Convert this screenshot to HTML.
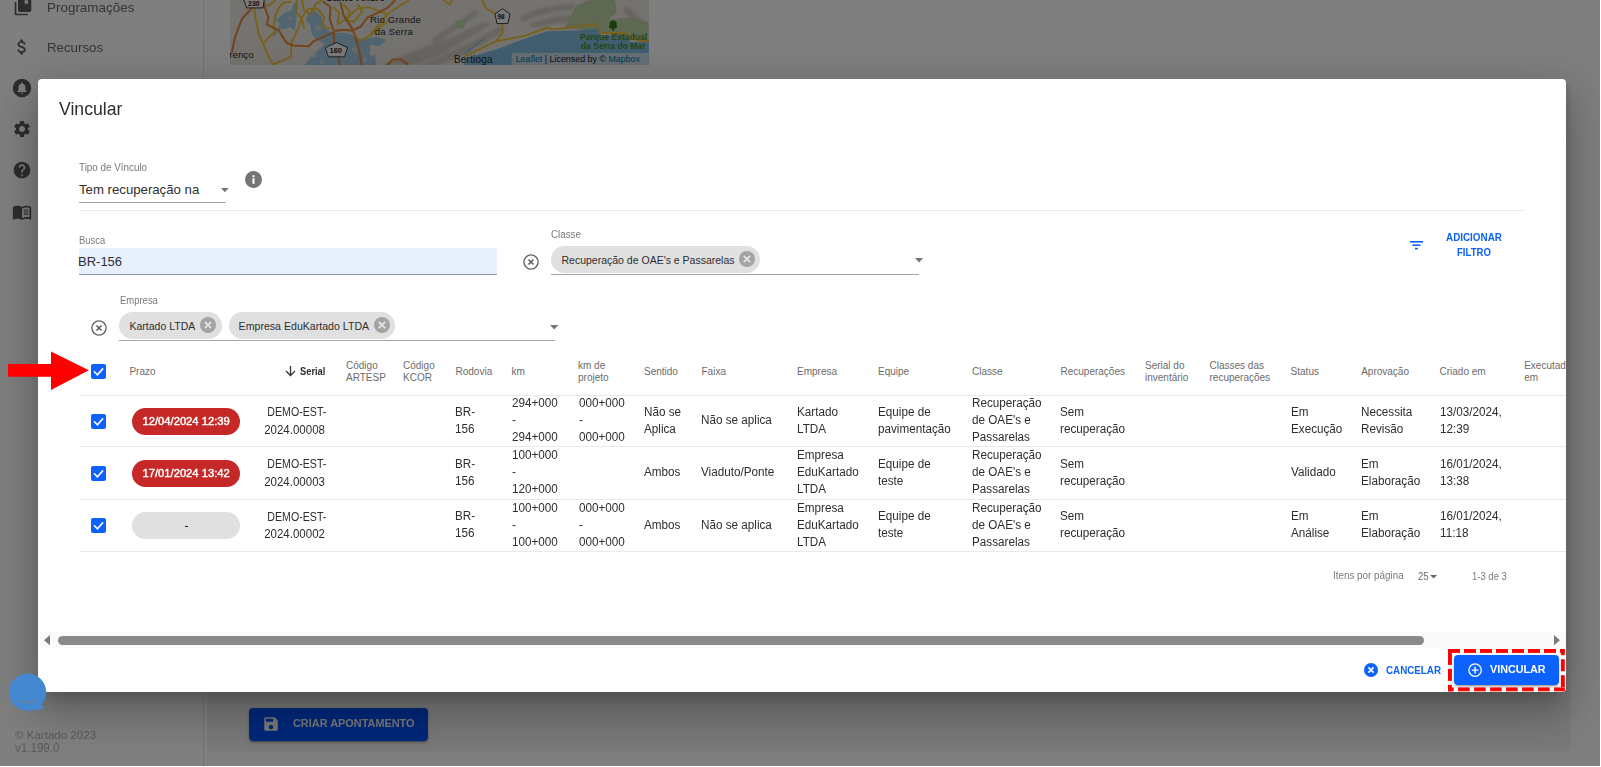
<!DOCTYPE html>
<html><head><meta charset="utf-8"><style>
html,body{margin:0;padding:0;}
body{width:1601px;height:767px;overflow:hidden;position:relative;background:#fff;font-family:"Liberation Sans", sans-serif;}
.t{position:absolute;white-space:nowrap;line-height:1;}
.r{position:absolute;box-sizing:border-box;}
#page{position:absolute;left:0;top:0;width:1601px;height:767px;}
#ov{position:absolute;left:0;top:0;width:1600px;height:766px;background:rgba(0,0,0,0.5);}
#dlg{position:absolute;left:38px;top:79px;width:1528px;height:612.8px;background:#fff;border-radius:4px;overflow:hidden;
 box-shadow:0 11px 15px -7px rgba(0,0,0,.2),0 24px 38px 3px rgba(0,0,0,.14),0 9px 46px 8px rgba(0,0,0,.12);}
</style></head><body>
<div id="page"><div class="r" style="left:0.00px;top:0.00px;width:203.00px;height:767.00px;background:#fff;"></div><div class="r" style="left:203.00px;top:0.00px;width:1.00px;height:767.00px;background:#e6e6e6;"></div><div class="r" style="left:204.00px;top:0.00px;width:1397.00px;height:767.00px;background:#fff;"></div><div class="r" style="left:208.00px;top:85.00px;width:1362.00px;height:666.00px;background:#f2f2f2;border-radius:4px;box-shadow:0 0 0 0.5px rgba(0,0,0,.05);"></div><svg class="r" style="left:13.00px;top:-3.00px;overflow:visible" width="20" height="20" viewBox="0 0 24 24"><path d="M4 6H2v14c0 1.1.9 2 2 2h14v-2H4V6zm16-4H8c-1.1 0-2 .9-2 2v12c0 1.1.9 2 2 2h12c1.1 0 2-.9 2-2V4c0-1.1-.9-2-2-2zm-2 2v5l-2-1.5L14 9V4h4z" fill="#5a5a5a"/></svg><svg class="r" style="left:12.00px;top:37.00px;overflow:visible" width="20" height="20" viewBox="0 0 24 24"><path d="M11.8 10.9c-2.27-.59-3-1.2-3-2.15 0-1.09 1.01-1.85 2.7-1.85 1.78 0 2.44.85 2.5 2.1h2.21c-.07-1.72-1.12-3.3-3.21-3.81V3h-3v2.16c-1.94.42-3.5 1.68-3.5 3.61 0 2.31 1.91 3.46 4.7 4.13 2.5.6 3 1.48 3 2.41 0 .69-.49 1.79-2.7 1.79-2.06 0-2.87-.92-2.98-2.1h-2.2c.12 2.19 1.76 3.42 3.68 3.83V21h3v-2.15c1.95-.37 3.5-1.5 3.5-3.55 0-2.84-2.43-3.81-4.7-4.4z" fill="#5a5a5a"/></svg><svg class="r" style="left:12.00px;top:78.00px;overflow:visible" width="20" height="20" viewBox="0 0 24 24"><circle cx="12" cy="12" r="11" fill="#5a5a5a"/><path d="M12 19c.8 0 1.4-.6 1.4-1.4h-2.8c0 .8.6 1.4 1.4 1.4zm4.2-4.2v-3.5c0-2.15-1.15-3.95-3.15-4.43V6.4c0-.58-.47-1.05-1.05-1.05s-1.05.47-1.05 1.05v.47C8.95 7.35 7.8 9.14 7.8 11.3v3.5l-1.4 1.4v.7h11.2v-.7l-1.4-1.4z" fill="#fff"/></svg><svg class="r" style="left:12.00px;top:119.00px;overflow:visible" width="20" height="20" viewBox="0 0 24 24"><path d="M19.14 12.94c.04-.3.06-.61.06-.94 0-.32-.02-.64-.07-.94l2.03-1.58c.18-.14.23-.41.12-.61l-1.92-3.32c-.12-.22-.37-.29-.59-.22l-2.39.96c-.5-.38-1.03-.7-1.62-.94l-.36-2.54c-.04-.24-.24-.41-.48-.41h-3.84c-.24 0-.43.17-.47.41l-.36 2.54c-.59.24-1.13.57-1.62.94l-2.39-.96c-.22-.08-.47 0-.59.22L2.74 8.87c-.12.21-.08.47.12.61l2.03 1.58c-.05.3-.09.63-.09.94s.02.64.07.94l-2.03 1.58c-.18.14-.23.41-.12.61l1.92 3.32c.12.22.37.29.59.22l2.39-.96c.5.38 1.03.7 1.62.94l.36 2.54c.05.24.24.41.48.41h3.84c.24 0 .44-.17.47-.41l.36-2.54c.59-.24 1.13-.56 1.62-.94l2.39.96c.22.08.47 0 .59-.22l1.92-3.32c.12-.22.07-.47-.12-.61l-2.01-1.58zM12 15.6c-1.98 0-3.6-1.62-3.6-3.6s1.62-3.6 3.6-3.6 3.6 1.62 3.6 3.6-1.62 3.6-3.6 3.6z" fill="#5a5a5a"/></svg><svg class="r" style="left:12.00px;top:160.00px;overflow:visible" width="20" height="20" viewBox="0 0 24 24"><path d="M12 2C6.48 2 2 6.48 2 12s4.48 10 10 10 10-4.48 10-10S17.52 2 12 2zm1 17h-2v-2h2v2zm2.07-7.75l-.9.92C13.45 12.9 13 13.5 13 15h-2v-.5c0-1.1.45-2.1 1.17-2.83l1.24-1.26c.37-.36.59-.86.59-1.41 0-1.1-.9-2-2-2s-2 .9-2 2H8c0-2.21 1.79-4 4-4s4 1.79 4 4c0 .88-.36 1.68-.93 2.25z" fill="#5a5a5a"/></svg><svg class="r" style="left:12.00px;top:202.00px;overflow:visible" width="20" height="20" viewBox="0 0 24 24"><path d="M21 5c-1.11-.35-2.33-.5-3.5-.5-1.95 0-4.05.4-5.5 1.5-1.45-1.1-3.55-1.5-5.5-1.5S2.45 4.9 1 6v14.65c0 .25.25.5.5.5.1 0 .15-.05.25-.05C3.1 20.45 5.05 20 6.5 20c1.95 0 4.05.4 5.5 1.5 1.35-.85 3.8-1.5 5.5-1.5 1.65 0 3.35.3 4.75 1.05.1.05.15.05.25.05.25 0 .5-.25.5-.5V6c-.6-.45-1.25-.75-2-1zm0 13.5c-1.1-.35-2.3-.5-3.5-.5-1.7 0-4.15.65-5.5 1.5V8c1.35-.85 3.8-1.5 5.5-1.5 1.2 0 2.4.15 3.5.5v11.5z" fill="#5a5a5a"/><path d="M14 9.5h5.5M14 12h5.5M14 14.5h5.5" stroke="#5a5a5a" stroke-width="1.3"/></svg><div class="t" style="left:46.61px;top:0.97px;font-size:13.5px;color:#6a6a6a;transform:scaleX(0.9949);transform-origin:1.00px 0;">Programações</div><div class="t" style="left:46.62px;top:41.37px;font-size:13.5px;color:#6a6a6a;transform:scaleX(0.9828);transform-origin:1.00px 0;">Recursos</div><div class="t" style="left:14.90px;top:729.61px;font-size:11.8px;color:#b4b4b4;transform:scaleX(0.9790);transform-origin:-0.00px 0;">© Kartado 2023</div><div class="t" style="left:15.20px;top:742.73px;font-size:11.9px;color:#b4b4b4;transform:scaleX(0.9738);transform-origin:-0.00px 0;">v1.199.0</div><svg class="r" style="left:230.00px;top:0.00px;overflow:hidden" width="419" height="65.3" viewBox="0 0 419 65.3">
<rect x="0" y="0" width="419" height="66" fill="#ebe7e0"/>
<filter id="bl"><feGaussianBlur stdDeviation="1.6"/></filter><g fill="#c9c3b8" opacity="0.8" filter="url(#bl)">
<path d="M150 66 C170 55 190 48 210 42 C225 36 240 28 255 22 L262 24 C245 34 230 44 215 52 C200 60 185 66 175 66 Z"/>
<path d="M190 66 C205 58 225 50 245 40 C255 34 262 30 270 26 L275 30 C262 38 250 46 235 54 C222 60 210 66 200 66 Z"/>
<path d="M200 40 C215 30 230 20 245 10 L250 12 C236 24 220 34 205 44 Z"/>
<path d="M290 18 C300 10 320 4 345 4 L344 10 C325 10 305 16 292 22 Z"/>
<path d="M300 24 C315 18 330 14 345 16 L342 22 C328 22 312 26 302 28 Z"/>
<path d="M395 6 C405 10 412 20 418 30 L418 40 C410 30 402 20 393 12 Z"/>
</g>
<path d="M346.5 5.2 L358.7 0 L385 0 L386.7 13.1 L378.8 19.2 L402.4 17.5 L418.6 21.9 L418.6 42 L402.4 36.7 L367.4 33.2 L358.7 30.6 L334.2 28 Z" fill="#bfd0a6"/>
<path d="M224.8 22 C228 19 234 19 235.3 22 L234 28.9 L226 28 Z" fill="#bfd8a8"/>
<path d="M234.7 66 L234.7 59 L271.8 47.5 L295.2 38.5 L317.2 31.2 L347.4 30.5 L368 28.5 L371 35.4 L394.1 34.7 L401 42 L418.9 41.5 L418.9 66 Z" fill="#80bde0"/>
<path d="M49 17.5 L56 12 L61.2 10.5 L64.7 1.7 L67 3 L66.5 17.5 L64.7 30.6 L60 27 L56 28.9 L49 28.9 L43.7 37.6 L42.5 35 L47 30 L49.8 23.6 L46 20 Z" fill="#80bde0" opacity="0.68"/>
<path d="M78.7 12.2 L85.7 10.5 L91.8 17.5 L96.2 28.9 L103.2 33.2 L113.7 32.4 L122.4 35 L126.8 39.4 L140 37.6 L148 37 L156 40 L150 46 L140 45 L140 66 L74.3 66 L78.7 59.5 L87.4 50.7 L94.5 43.7 L85.7 39.4 L81.3 33.2 L80 25 L76 20 Z" fill="#80bde0" opacity="0.68"/>
<path d="M140 56 L145 55 L146 66 L140 66 Z" fill="#80bde0" opacity="0.68"/>
<path d="M234.4 54 L253.7 38.5" stroke="#80bde0" stroke-width="1.3" fill="none"/>
<g fill="#ebe7e0" opacity="0.55"><circle cx="88" cy="28" r="3"/><circle cx="84" cy="55" r="2.5"/><circle cx="125" cy="50" r="3"/><circle cx="135" cy="60" r="2.5"/><circle cx="60" cy="18" r="2"/><circle cx="92" cy="62" r="2"/></g>
<g stroke="#f2c23c" stroke-width="2" fill="none" stroke-linejoin="round">
<path d="M24.5 7.9 L25.4 17.5 L28.9 35 L33.2 43.7 L36.7 52.5 L42.8 64.7"/>
<path d="M33.2 43.7 L41.1 35 L45.5 32.4 L43.7 26.2 L45.5 15.7 L49 7 L54.2 2.6 L61.2 1.7"/>
<path d="M36.7 6.1 L42 3.5 L45.5 0"/>
<path d="M42.8 64.7 L61.2 56.8 L61.2 43.7 L69.1 26.2 L71.7 17.5 L74.3 28.9"/>
<path d="M67 0 L66.5 13 L71.7 17.5 L78.7 8.7 L87.4 8.7 L94.5 17.5 L91.8 26.2 L100.6 28.9"/>
<path d="M103.2 7 L109.3 13.1 L107.5 24.5 L118 17.5 L126.8 8.7 L140 7"/>
<path d="M72 0 L74 10 L80 14 L86 4 L92 0"/>
<path d="M113 4 L120 12 L116 20 L124 22 L132 12 L128 4"/>
<path d="M125 36 L131 41 L140 35 L157.5 14 L170.6 5.2 L179.4 0"/>
<path d="M140 7.9 L157.5 14"/>
<path d="M213.5 0 L219.6 4.4 L222.2 0"/>
<path d="M252 0 L256.3 8.7 L266 14"/>
<path d="M272 24.5 L272.9 32.4 L266.8 40.2"/>
<path d="M234.7 56.3 L266.3 41.2 L295.2 35.7 L317.2 27.5 L322.7 29.5 L366.7 24 L370.1 33 L394.1 33 L409.3 41.2 L418.9 40.5"/>

<path d="M140 36 L151 26 L160 20"/>
</g>
<g stroke="#e58a3a" stroke-width="2.1" fill="none" stroke-linejoin="round">
<path d="M1.7 52.5 L5.2 36.7 L12.2 18.4 L21.9 8.3"/>
<path d="M34.1 2.6 L35 7.9 L38.5 17.5 L36.7 24.5 L49 30.6 L52.5 36.7 L56.8 42.8 L63 45.5 L78.7 46.3 L83.9 41.1 L103.2 32.4 L106.7 30.6 L113.7 29.7 L122.4 30.6 L131.2 26.2 L137.3 17.5 L145.2 14 L157.5 7.9 L165.4 0"/>
<path d="M92.7 1.7 L100.6 7 L99.7 19.2 L104 31.5 L104 42 L108.4 56.8 L110.2 66"/>
<path d="M110.2 1.7 L113.7 15.7 L122.4 28.9 L125.9 38.5 L129.4 52.5 L132 66"/>
<path d="M156.6 66 L162.7 59.5 L170.6 59.5 L178.5 64.7"/>
</g>
<g fill="#f4f4f4" stroke="#2a2a2a" stroke-width="0.9">
<path d="M13 -2 L34.5 -2 L33 7.9 L16.6 7.9 Z"/>
<path d="M106.5 42.5 L117.6 47.7 L114.5 56.8 L98.4 56.8 L95.3 47.7 Z"/>
<path d="M272.5 8.7 L280 14 L278 23.6 L267 23.6 L265 14 Z"/>
</g>
<g font-family="Liberation Sans" font-weight="700" fill="#222">
<text x="18" y="6.5" font-size="7">230</text>
<text x="99.5" y="53.5" font-size="7.5">160</text>
<text x="267.5" y="19.5" font-size="6.5">98</text>
</g>
<g font-family="Liberation Sans" fill="#2a2a2a">
<text x="96" y="0.6" font-size="10" font-weight="700">Santo André</text>
<text x="140" y="22.7" font-size="9.6" letter-spacing="0.2">Rio Grande</text>
<text x="144.8" y="35" font-size="9.6" letter-spacing="0.2">da Serra</text>
<text x="-3" y="57.7" font-size="9.8">irenço</text>
<text x="224" y="63.4" font-size="10" letter-spacing="0.2">Bertioga</text>
</g>
<path d="M383.2 20.5 C380 20.5 379 23 380 25 C378 26 379 29 382 28.5 L382.4 31 L384 31 L384.2 28.5 C387 29 388 26 386.4 25 C387.4 23 386.4 20.5 383.2 20.5 Z" fill="#2e7d1e"/>
<g font-family="Liberation Sans" font-weight="700" fill="#4d8a2c">
<text x="350" y="39.8" font-size="8.6">Parque Estadual</text>
<text x="350.8" y="49.4" font-size="8.6">da Serra do Mar</text>
</g>
<rect x="281.7" y="52.9" width="137" height="13.2" fill="#dfe7ec" opacity="0.8"/>
<text x="285.7" y="62.5" font-size="8.9" fill="#222" font-family="Liberation Sans"><tspan fill="#0078a8">Leaflet</tspan> | Licensed by © <tspan fill="#0078a8">Mapbox</tspan></text>
</svg><div class="r" style="left:249.00px;top:708.00px;width:179.00px;height:33.00px;background:#0050f5;border-radius:4px;box-shadow:0 3px 1px -2px rgba(0,0,0,.2),0 2px 2px 0 rgba(0,0,0,.14),0 1px 5px 0 rgba(0,0,0,.12);"></div><svg class="r" style="left:262.00px;top:715.00px;overflow:visible" width="18" height="18" viewBox="0 0 24 24"><path d="M17 3H5a2 2 0 0 0-2 2v14a2 2 0 0 0 2 2h14c1.1 0 2-.9 2-2V7l-4-4zm-5 16c-1.66 0-3-1.34-3-3s1.34-3 3-3 3 1.34 3 3-1.34 3-3 3zm3-10H5V5h10v4z" fill="#f4f4f4"/></svg><div class="t" style="left:292.60px;top:718.07px;font-size:11.5px;color:#f0f0f0;font-weight:700;transform:scaleX(0.9481);transform-origin:-0.00px 0;">CRIAR APONTAMENTO</div></div>
<div id="ov"></div>
<div id="dlg"><div class="t" style="left:20.60px;top:22.32px;font-size:17.7px;color:#2e2e2e;transform:scaleX(0.9970);transform-origin:-0.00px 0;">Vincular</div><div class="t" style="left:41.40px;top:83.37px;font-size:10.9px;color:#7a7a7a;transform:scaleX(0.9041);transform-origin:-0.00px 0;">Tipo de Vínculo</div><div class="t" style="left:41.00px;top:103.58px;font-size:13.2px;color:#2e2e2e;transform-origin:-0.00px 0;">Tem recuperação na</div><svg class="r" style="left:183.00px;top:109.00px;overflow:visible" width="7.75" height="4.199999999999989" viewBox="0 0 7.75 4.199999999999989"><path d="M0 0 L7.75 0 L3.875 4.199999999999989 Z" fill="#757575"/></svg><div class="r" style="left:41.00px;top:123.00px;width:147.00px;height:1.00px;background:#a6a6a6;"></div><svg class="r" style="left:207.00px;top:92.00px;overflow:visible" width="17" height="17" viewBox="0 0 17 17"><circle cx="8.5" cy="8.5" r="8.5" fill="#757575"/><rect x="7.5" y="7.2" width="2" height="5.6" fill="#fff"/><rect x="7.5" y="4.2" width="2" height="2" fill="#fff"/></svg><div class="r" style="left:41.00px;top:131.00px;width:1446.00px;height:1.00px;background:#e9e9e9;"></div><div class="t" style="left:41.20px;top:155.87px;font-size:10.9px;color:#7a7a7a;transform:scaleX(0.8651);transform-origin:-0.00px 0;">Busca</div><div class="r" style="left:41.00px;top:169.00px;width:418.00px;height:26.00px;background:#e8f0fe;"></div><div class="r" style="left:41.00px;top:195.00px;width:418.00px;height:1.00px;background:#8d93a3;"></div><div class="t" style="left:40.00px;top:176.00px;font-size:13px;color:#2e2e2e;transform-origin:1.00px 0;">BR-156</div><svg class="r" style="left:484.60px;top:175.10px;overflow:visible" width="16" height="16" viewBox="0 0 16 16"><circle cx="8.0" cy="8.0" r="7.1" fill="none" stroke="#616161" stroke-width="1.35"/><path d="M5.5 5.5 L10.5 10.5 M10.5 5.5 L5.5 10.5" stroke="#616161" stroke-width="1.7"/></svg><div class="t" style="left:513.20px;top:149.87px;font-size:10.9px;color:#7a7a7a;transform:scaleX(0.8997);transform-origin:-0.00px 0;">Classe</div><div class="r" style="left:513.00px;top:167.00px;width:209.00px;height:26.70px;background:#e0e0e0;border-radius:14px;"></div><div class="t" style="left:523.50px;top:175.81px;font-size:10.5px;color:#2e2e2e;transform-origin:-0.00px 0;">Recuperação de OAE's e Passarelas</div><svg class="r" style="left:700.90px;top:172.40px;overflow:visible" width="16" height="16" viewBox="0 0 16 16"><circle cx="8.0" cy="8.0" r="8.0" fill="#a3a3a3"/><path d="M4.8 4.8 L11.2 11.2 M11.2 4.8 L4.8 11.2" stroke="#e6e6e6" stroke-width="1.7"/></svg><div class="r" style="left:513.00px;top:195.00px;width:368.00px;height:1.00px;background:#a6a6a6;"></div><svg class="r" style="left:877.40px;top:179.00px;overflow:visible" width="8.100000000000023" height="4.600000000000023" viewBox="0 0 8.100000000000023 4.600000000000023"><path d="M0 0 L8.100000000000023 0 L4.050000000000011 4.600000000000023 Z" fill="#757575"/></svg><svg class="r" style="left:1371.50px;top:162.00px;overflow:visible" width="13" height="8.5" viewBox="0 0 13 8.5"><rect x="0" y="0" width="13" height="1.6" fill="#0b62ff"/><rect x="2.5" y="3.4" width="8" height="1.6" fill="#0b62ff"/><rect x="5" y="6.8" width="3" height="1.6" fill="#0b62ff"/></svg><div class="t" style="left:1408.10px;top:152.71px;font-size:10.5px;color:#0b62ff;font-weight:700;transform:scaleX(0.9397);transform-origin:-0.00px 0;">ADICIONAR</div><div class="t" style="left:1419.40px;top:167.71px;font-size:10.5px;color:#0b62ff;font-weight:700;transform:scaleX(0.9117);transform-origin:-0.00px 0;">FILTRO</div><svg class="r" style="left:52.50px;top:241.00px;overflow:visible" width="16" height="16" viewBox="0 0 16 16"><circle cx="8.0" cy="8.0" r="7.1" fill="none" stroke="#616161" stroke-width="1.35"/><path d="M5.5 5.5 L10.5 10.5 M10.5 5.5 L5.5 10.5" stroke="#616161" stroke-width="1.7"/></svg><div class="t" style="left:81.60px;top:216.07px;font-size:10.9px;color:#7a7a7a;transform:scaleX(0.8692);transform-origin:-0.00px 0;">Empresa</div><div class="r" style="left:81.00px;top:233.00px;width:102.50px;height:26.80px;background:#e0e0e0;border-radius:14px;"></div><div class="t" style="left:91.50px;top:242.31px;font-size:10.5px;color:#2e2e2e;transform-origin:-0.00px 0;">Kartado LTDA</div><svg class="r" style="left:162.40px;top:238.40px;overflow:visible" width="16" height="16" viewBox="0 0 16 16"><circle cx="8.0" cy="8.0" r="8.0" fill="#a3a3a3"/><path d="M4.8 4.8 L11.2 11.2 M11.2 4.8 L4.8 11.2" stroke="#e6e6e6" stroke-width="1.7"/></svg><div class="r" style="left:190.70px;top:233.00px;width:166.20px;height:26.80px;background:#e0e0e0;border-radius:14px;"></div><div class="t" style="left:200.60px;top:242.23px;font-size:10.6px;color:#2e2e2e;transform-origin:-0.00px 0;">Empresa EduKartado LTDA</div><svg class="r" style="left:335.80px;top:238.40px;overflow:visible" width="16" height="16" viewBox="0 0 16 16"><circle cx="8.0" cy="8.0" r="8.0" fill="#a3a3a3"/><path d="M4.8 4.8 L11.2 11.2 M11.2 4.8 L4.8 11.2" stroke="#e6e6e6" stroke-width="1.7"/></svg><div class="r" style="left:81.00px;top:261.00px;width:435.50px;height:1.00px;background:#a6a6a6;"></div><svg class="r" style="left:512.00px;top:246.00px;overflow:visible" width="8.399999999999977" height="4.399999999999977" viewBox="0 0 8.399999999999977 4.399999999999977"><path d="M0 0 L8.399999999999977 0 L4.199999999999989 4.399999999999977 Z" fill="#757575"/></svg><svg class="r" style="left:53.40px;top:284.80px;overflow:visible" width="15" height="15" viewBox="0 0 15 15"><rect x="0" y="0" width="15" height="15" rx="2" fill="#0b62ff"/><path d="M2.9 7.3 L6.4 10.8 L12.1 4.4" stroke="#fff" stroke-width="1.6" fill="none"/></svg><div class="t" style="left:91.40px;top:287.84px;font-size:10px;color:#6b6b6b;transform-origin:-0.00px 0;">Prazo</div><svg class="r" style="left:247.00px;top:287.00px;overflow:visible" width="11" height="10.5" viewBox="0 0 11 10.5"><path d="M5.5 0 V9.2 M1 5 L5.5 9.5 L10 5" stroke="#333" stroke-width="1.3" fill="none"/></svg><div class="t" style="left:262.30px;top:288.08px;font-size:10.3px;color:#2e2e2e;font-weight:700;transform:scaleX(0.9046);transform-origin:-0.00px 0;">Serial</div><div class="t" style="left:308.00px;top:280.96px;font-size:10px;line-height:11.75px;color:#6b6b6b;">Código<br>ARTESP</div><div class="t" style="left:365.00px;top:280.96px;font-size:10px;line-height:11.75px;color:#6b6b6b;">Código<br>KCOR</div><div class="t" style="left:417.50px;top:287.84px;font-size:10px;color:#6b6b6b;transform-origin:-0.00px 0;">Rodovia</div><div class="t" style="left:473.50px;top:287.84px;font-size:10px;color:#6b6b6b;transform-origin:-0.00px 0;">km</div><div class="t" style="left:540.00px;top:280.96px;font-size:10px;line-height:11.75px;color:#6b6b6b;">km de<br>projeto</div><div class="t" style="left:606.00px;top:287.84px;font-size:10px;color:#6b6b6b;transform-origin:-0.00px 0;">Sentido</div><div class="t" style="left:663.50px;top:287.84px;font-size:10px;color:#6b6b6b;transform-origin:-0.00px 0;">Faixa</div><div class="t" style="left:759.00px;top:287.84px;font-size:10px;color:#6b6b6b;transform-origin:-0.00px 0;">Empresa</div><div class="t" style="left:840.00px;top:287.84px;font-size:10px;color:#6b6b6b;transform-origin:-0.00px 0;">Equipe</div><div class="t" style="left:934.00px;top:287.84px;font-size:10px;color:#6b6b6b;transform-origin:-0.00px 0;">Classe</div><div class="t" style="left:1022.50px;top:287.84px;font-size:10px;color:#6b6b6b;transform-origin:-0.00px 0;">Recuperações</div><div class="t" style="left:1107.00px;top:280.96px;font-size:10px;line-height:11.75px;color:#6b6b6b;">Serial do<br>inventário</div><div class="t" style="left:1171.50px;top:280.96px;font-size:10px;line-height:11.75px;color:#6b6b6b;">Classes das<br>recuperações</div><div class="t" style="left:1252.60px;top:287.84px;font-size:10px;color:#6b6b6b;transform-origin:-0.00px 0;">Status</div><div class="t" style="left:1323.20px;top:287.84px;font-size:10px;color:#6b6b6b;transform-origin:-0.00px 0;">Aprovação</div><div class="t" style="left:1401.50px;top:287.84px;font-size:10px;color:#6b6b6b;transform-origin:-0.00px 0;">Criado em</div><div class="t" style="left:1486.20px;top:280.96px;font-size:10px;line-height:11.75px;color:#6b6b6b;">Executado<br>em</div><div class="r" style="left:41.00px;top:316.00px;width:1491.00px;height:1.00px;background:#e9e9e9;"></div><div class="r" style="left:41.00px;top:367.00px;width:1491.00px;height:1.00px;background:#e9e9e9;"></div><div class="r" style="left:41.00px;top:420.00px;width:1491.00px;height:1.00px;background:#e9e9e9;"></div><div class="r" style="left:41.00px;top:472.00px;width:1491.00px;height:1.00px;background:#e9e9e9;"></div><svg class="r" style="left:53.20px;top:334.60px;overflow:visible" width="15" height="15" viewBox="0 0 15 15"><rect x="0" y="0" width="15" height="15" rx="2" fill="#0b62ff"/><path d="M2.9 7.3 L6.4 10.8 L12.1 4.4" stroke="#fff" stroke-width="1.6" fill="none"/></svg><div class="r" style="left:94.00px;top:328.80px;width:108.30px;height:27.20px;background:#c62828;border-radius:14px;"></div><div class="t" style="left:103.29px;top:336.38px;font-size:11.6px;color:#fff;transform:scaleX(0.9687);transform-origin:44.91px 0;-webkit-text-stroke:0.45px #fff;">12/04/2024 12:39</div><div class="t" style="left:219.78px;top:327.39px;font-size:12.3px;color:#2e2e2e;transform:scaleX(0.8628);transform-origin:68.22px 0;">DEMO-EST-</div><div class="t" style="left:222.27px;top:344.79px;font-size:12.3px;color:#2e2e2e;transform:scaleX(0.9366);transform-origin:65.13px 0;">2024.00008</div><div class="t" style="left:416.50px;top:324.74px;font-size:12.3px;line-height:17px;color:#2e2e2e;transform:scaleX(0.951);transform-origin:0 0;">BR-<br>156</div><div class="t" style="left:473.50px;top:316.24px;font-size:12.3px;line-height:17px;color:#2e2e2e;transform:scaleX(0.951);transform-origin:0 0;">294+000<br>-<br>294+000</div><div class="t" style="left:540.50px;top:316.24px;font-size:12.3px;line-height:17px;color:#2e2e2e;transform:scaleX(0.951);transform-origin:0 0;">000+000<br>-<br>000+000</div><div class="t" style="left:606.00px;top:324.74px;font-size:12.3px;line-height:17px;color:#2e2e2e;transform:scaleX(0.951);transform-origin:0 0;">Não se<br>Aplica</div><div class="t" style="left:662.50px;top:333.24px;font-size:12.3px;line-height:17px;color:#2e2e2e;transform:scaleX(0.951);transform-origin:0 0;">Não se aplica</div><div class="t" style="left:758.50px;top:324.74px;font-size:12.3px;line-height:17px;color:#2e2e2e;transform:scaleX(0.951);transform-origin:0 0;">Kartado<br>LTDA</div><div class="t" style="left:839.60px;top:324.74px;font-size:12.3px;line-height:17px;color:#2e2e2e;transform:scaleX(0.951);transform-origin:0 0;">Equipe de<br>pavimentação</div><div class="t" style="left:933.50px;top:316.24px;font-size:12.3px;line-height:17px;color:#2e2e2e;transform:scaleX(0.951);transform-origin:0 0;">Recuperação<br>de OAE's e<br>Passarelas</div><div class="t" style="left:1021.50px;top:324.74px;font-size:12.3px;line-height:17px;color:#2e2e2e;transform:scaleX(0.951);transform-origin:0 0;">Sem<br>recuperação</div><div class="t" style="left:1253.00px;top:324.74px;font-size:12.3px;line-height:17px;color:#2e2e2e;transform:scaleX(0.951);transform-origin:0 0;">Em<br>Execução</div><div class="t" style="left:1323.30px;top:324.74px;font-size:12.3px;line-height:17px;color:#2e2e2e;transform:scaleX(0.951);transform-origin:0 0;">Necessita<br>Revisão</div><div class="t" style="left:1402.00px;top:324.74px;font-size:12.3px;line-height:17px;color:#2e2e2e;transform:scaleX(0.951);transform-origin:0 0;">13/03/2024,<br>12:39</div><svg class="r" style="left:53.20px;top:386.60px;overflow:visible" width="15" height="15" viewBox="0 0 15 15"><rect x="0" y="0" width="15" height="15" rx="2" fill="#0b62ff"/><path d="M2.9 7.3 L6.4 10.8 L12.1 4.4" stroke="#fff" stroke-width="1.6" fill="none"/></svg><div class="r" style="left:94.00px;top:380.80px;width:108.30px;height:27.20px;background:#c62828;border-radius:14px;"></div><div class="t" style="left:103.29px;top:388.38px;font-size:11.6px;color:#fff;transform:scaleX(0.9687);transform-origin:44.91px 0;-webkit-text-stroke:0.45px #fff;">17/01/2024 13:42</div><div class="t" style="left:219.78px;top:379.39px;font-size:12.3px;color:#2e2e2e;transform:scaleX(0.8628);transform-origin:68.22px 0;">DEMO-EST-</div><div class="t" style="left:222.27px;top:396.79px;font-size:12.3px;color:#2e2e2e;transform:scaleX(0.9366);transform-origin:65.13px 0;">2024.00003</div><div class="t" style="left:416.50px;top:376.74px;font-size:12.3px;line-height:17px;color:#2e2e2e;transform:scaleX(0.951);transform-origin:0 0;">BR-<br>156</div><div class="t" style="left:473.50px;top:368.24px;font-size:12.3px;line-height:17px;color:#2e2e2e;transform:scaleX(0.951);transform-origin:0 0;">100+000<br>-<br>120+000</div><div class="t" style="left:606.00px;top:385.24px;font-size:12.3px;line-height:17px;color:#2e2e2e;transform:scaleX(0.951);transform-origin:0 0;">Ambos</div><div class="t" style="left:662.50px;top:385.24px;font-size:12.3px;line-height:17px;color:#2e2e2e;transform:scaleX(0.951);transform-origin:0 0;">Viaduto/Ponte</div><div class="t" style="left:758.50px;top:368.24px;font-size:12.3px;line-height:17px;color:#2e2e2e;transform:scaleX(0.951);transform-origin:0 0;">Empresa<br>EduKartado<br>LTDA</div><div class="t" style="left:839.60px;top:376.74px;font-size:12.3px;line-height:17px;color:#2e2e2e;transform:scaleX(0.951);transform-origin:0 0;">Equipe de<br>teste</div><div class="t" style="left:933.50px;top:368.24px;font-size:12.3px;line-height:17px;color:#2e2e2e;transform:scaleX(0.951);transform-origin:0 0;">Recuperação<br>de OAE's e<br>Passarelas</div><div class="t" style="left:1021.50px;top:376.74px;font-size:12.3px;line-height:17px;color:#2e2e2e;transform:scaleX(0.951);transform-origin:0 0;">Sem<br>recuperação</div><div class="t" style="left:1253.00px;top:385.24px;font-size:12.3px;line-height:17px;color:#2e2e2e;transform:scaleX(0.951);transform-origin:0 0;">Validado</div><div class="t" style="left:1323.30px;top:376.74px;font-size:12.3px;line-height:17px;color:#2e2e2e;transform:scaleX(0.951);transform-origin:0 0;">Em<br>Elaboração</div><div class="t" style="left:1402.00px;top:376.74px;font-size:12.3px;line-height:17px;color:#2e2e2e;transform:scaleX(0.951);transform-origin:0 0;">16/01/2024,<br>13:38</div><svg class="r" style="left:53.20px;top:439.10px;overflow:visible" width="15" height="15" viewBox="0 0 15 15"><rect x="0" y="0" width="15" height="15" rx="2" fill="#0b62ff"/><path d="M2.9 7.3 L6.4 10.8 L12.1 4.4" stroke="#fff" stroke-width="1.6" fill="none"/></svg><div class="r" style="left:94.00px;top:433.30px;width:108.30px;height:27.20px;background:#e0e0e0;border-radius:14px;"></div><div class="r" style="left:146.60px;top:446.80px;width:3.50px;height:1.60px;background:#222;"></div><div class="t" style="left:219.78px;top:431.89px;font-size:12.3px;color:#2e2e2e;transform:scaleX(0.8628);transform-origin:68.22px 0;">DEMO-EST-</div><div class="t" style="left:222.27px;top:449.29px;font-size:12.3px;color:#2e2e2e;transform:scaleX(0.9366);transform-origin:65.13px 0;">2024.00002</div><div class="t" style="left:416.50px;top:429.24px;font-size:12.3px;line-height:17px;color:#2e2e2e;transform:scaleX(0.951);transform-origin:0 0;">BR-<br>156</div><div class="t" style="left:473.50px;top:420.74px;font-size:12.3px;line-height:17px;color:#2e2e2e;transform:scaleX(0.951);transform-origin:0 0;">100+000<br>-<br>100+000</div><div class="t" style="left:540.50px;top:420.74px;font-size:12.3px;line-height:17px;color:#2e2e2e;transform:scaleX(0.951);transform-origin:0 0;">000+000<br>-<br>000+000</div><div class="t" style="left:606.00px;top:437.74px;font-size:12.3px;line-height:17px;color:#2e2e2e;transform:scaleX(0.951);transform-origin:0 0;">Ambos</div><div class="t" style="left:662.50px;top:437.74px;font-size:12.3px;line-height:17px;color:#2e2e2e;transform:scaleX(0.951);transform-origin:0 0;">Não se aplica</div><div class="t" style="left:758.50px;top:420.74px;font-size:12.3px;line-height:17px;color:#2e2e2e;transform:scaleX(0.951);transform-origin:0 0;">Empresa<br>EduKartado<br>LTDA</div><div class="t" style="left:839.60px;top:429.24px;font-size:12.3px;line-height:17px;color:#2e2e2e;transform:scaleX(0.951);transform-origin:0 0;">Equipe de<br>teste</div><div class="t" style="left:933.50px;top:420.74px;font-size:12.3px;line-height:17px;color:#2e2e2e;transform:scaleX(0.951);transform-origin:0 0;">Recuperação<br>de OAE's e<br>Passarelas</div><div class="t" style="left:1021.50px;top:429.24px;font-size:12.3px;line-height:17px;color:#2e2e2e;transform:scaleX(0.951);transform-origin:0 0;">Sem<br>recuperação</div><div class="t" style="left:1253.00px;top:429.24px;font-size:12.3px;line-height:17px;color:#2e2e2e;transform:scaleX(0.951);transform-origin:0 0;">Em<br>Análise</div><div class="t" style="left:1323.30px;top:429.24px;font-size:12.3px;line-height:17px;color:#2e2e2e;transform:scaleX(0.951);transform-origin:0 0;">Em<br>Elaboração</div><div class="t" style="left:1402.00px;top:429.24px;font-size:12.3px;line-height:17px;color:#2e2e2e;transform:scaleX(0.951);transform-origin:0 0;">16/01/2024,<br>11:18</div><div class="t" style="left:1294.90px;top:491.88px;font-size:10.3px;color:#7a7a7a;transform:scaleX(0.9579);transform-origin:-0.00px 0;">Itens por página</div><div class="t" style="left:1380.00px;top:491.71px;font-size:10.5px;color:#6a6a6a;transform:scaleX(0.9080);transform-origin:-0.00px 0;">25</div><svg class="r" style="left:1392.20px;top:496.00px;overflow:visible" width="7.2000000000000455" height="3.6000000000000227" viewBox="0 0 7.2000000000000455 3.6000000000000227"><path d="M0 0 L7.2000000000000455 0 L3.6000000000000227 3.6000000000000227 Z" fill="#6a6a6a"/></svg><div class="t" style="left:1433.90px;top:491.71px;font-size:10.5px;color:#7a7a7a;transform:scaleX(0.9046);transform-origin:-0.00px 0;">1-3 de 3</div><div class="r" style="left:2.00px;top:553.00px;width:1526.00px;height:16.00px;background:#fafafa;"></div><svg class="r" style="left:6.00px;top:556.00px;overflow:visible" width="6" height="10.3" viewBox="0 0 6 10.3"><path d="M6 0 L0 5.15 L6 10.3 Z" fill="#7a7a7a"/></svg><div class="r" style="left:19.90px;top:557.00px;width:1366.40px;height:9.30px;background:#8a8a8a;border-radius:5px;"></div><svg class="r" style="left:1516.00px;top:556.00px;overflow:visible" width="6" height="10.3" viewBox="0 0 6 10.3"><path d="M0 0 L6 5.15 L0 10.3 Z" fill="#7a7a7a"/></svg><svg class="r" style="left:1326.20px;top:583.70px;overflow:visible" width="14" height="14" viewBox="0 0 14 14"><circle cx="7" cy="7" r="7" fill="#0b62ff"/><path d="M4.4 4.4 L9.6 9.6 M9.6 4.4 L4.4 9.6" stroke="#fff" stroke-width="1.7"/></svg><div class="t" style="left:1348.00px;top:585.69px;font-size:11px;color:#0b62ff;font-weight:700;transform:scaleX(0.8903);transform-origin:-0.00px 0;">CANCELAR</div><div class="r" style="left:1416.20px;top:575.90px;width:104.80px;height:30.10px;background:#0b62ff;border-radius:4px;box-shadow:0 3px 1px -2px rgba(0,0,0,.2),0 2px 2px 0 rgba(0,0,0,.14),0 1px 5px 0 rgba(0,0,0,.12);"></div><svg class="r" style="left:1430.00px;top:583.70px;overflow:visible" width="14.2" height="14.2" viewBox="0 0 14.2 14.2"><circle cx="7.1" cy="7.1" r="6.2" fill="none" stroke="#fff" stroke-width="1.3"/><path d="M7.1 3.8 V10.4 M3.8 7.1 H10.4" stroke="#fff" stroke-width="1.4"/></svg><div class="t" style="left:1452.00px;top:584.69px;font-size:11px;color:#fff;font-weight:700;transform:scaleX(0.9774);transform-origin:-0.00px 0;">VINCULAR</div></div>
<svg class="r" style="left:0.00px;top:350.00px;overflow:visible" width="92" height="42" viewBox="0 0 92 42"><path d="M8 14.1 H51 V1.4 L88.9 20.3 L51 40 V26.8 H8 Z" fill="#ff0000"/></svg><svg class="r" style="left:1448.20px;top:649.00px;overflow:visible" width="116.79999999999995" height="42.299999999999955" viewBox="0 0 116.79999999999995 42.299999999999955"><g fill="#ff0000"><rect x="0.00" y="0.00" width="12.00" height="3.90"/><rect x="16.00" y="0.00" width="12.00" height="3.90"/><rect x="32.00" y="0.00" width="12.00" height="3.90"/><rect x="48.00" y="0.00" width="12.00" height="3.90"/><rect x="64.00" y="0.00" width="12.00" height="3.90"/><rect x="80.00" y="0.00" width="12.00" height="3.90"/><rect x="96.00" y="0.00" width="12.00" height="3.90"/><rect x="112.00" y="0.00" width="4.80" height="3.90"/><rect x="112.90" y="0.00" width="3.90" height="6.20"/><rect x="112.90" y="10.20" width="3.90" height="12.00"/><rect x="112.90" y="26.20" width="3.90" height="12.00"/><rect x="112.90" y="42.20" width="3.90" height="0.10"/><rect x="0.00" y="38.40" width="5.70" height="3.90"/><rect x="10.10" y="38.40" width="11.60" height="3.90"/><rect x="26.10" y="38.40" width="11.60" height="3.90"/><rect x="42.10" y="38.40" width="11.60" height="3.90"/><rect x="58.10" y="38.40" width="11.60" height="3.90"/><rect x="74.10" y="38.40" width="11.60" height="3.90"/><rect x="90.10" y="38.40" width="11.60" height="3.90"/><rect x="106.10" y="38.40" width="10.70" height="3.90"/><rect x="0.00" y="3.90" width="3.90" height="12.00"/><rect x="0.00" y="19.90" width="3.90" height="12.00"/><rect x="0.00" y="35.90" width="3.90" height="6.40"/></g></svg><svg class="r" style="left:8.00px;top:672.00px;overflow:visible" width="40" height="40" viewBox="0 0 40 40"><circle cx="19.6" cy="20.2" r="18.6" fill="#4388d0"/><path d="M29.5 30 L36.6 36.3 L25 38.6 Z" fill="#4388d0"/><path d="M12.3 28.4 Q19.8 32.6 27 28.4" stroke="#74808c" stroke-width="1.5" fill="none"/></svg>
</body></html>
